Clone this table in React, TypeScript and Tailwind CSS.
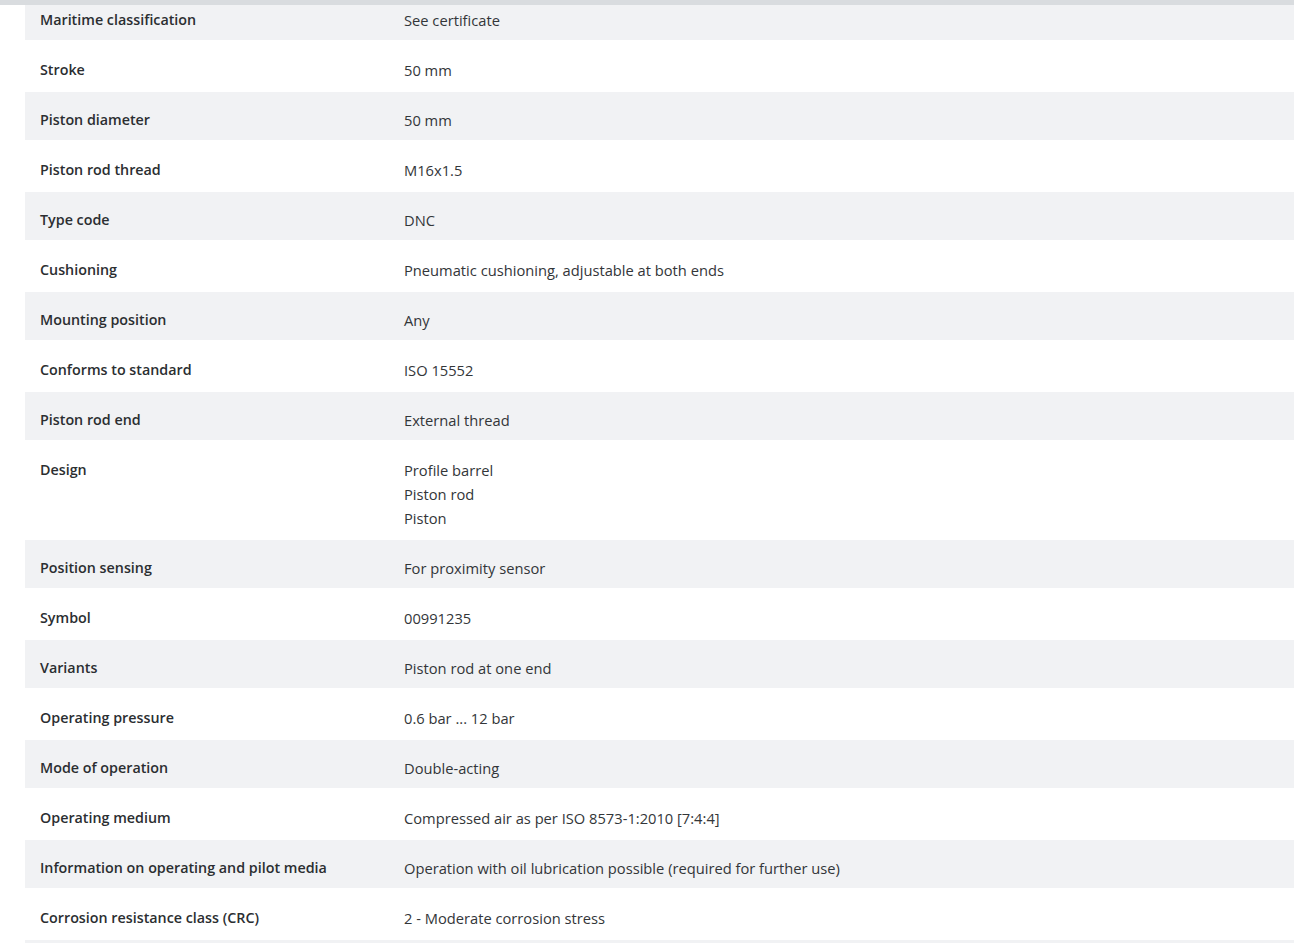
import React from "react";

interface SpecRow {
  label: string;
  value: string[];
}

const rows: SpecRow[] = [
  { label: "Maritime classification", value: ["See certificate"] },
  { label: "Stroke", value: ["50 mm"] },
  { label: "Piston diameter", value: ["50 mm"] },
  { label: "Piston rod thread", value: ["M16x1.5"] },
  { label: "Type code", value: ["DNC"] },
  { label: "Cushioning", value: ["Pneumatic cushioning, adjustable at both ends"] },
  { label: "Mounting position", value: ["Any"] },
  { label: "Conforms to standard", value: ["ISO 15552"] },
  { label: "Piston rod end", value: ["External thread"] },
  { label: "Design", value: ["Profile barrel", "Piston rod", "Piston"] },
  { label: "Position sensing", value: ["For proximity sensor"] },
  { label: "Symbol", value: ["00991235"] },
  { label: "Variants", value: ["Piston rod at one end"] },
  { label: "Operating pressure", value: ["0.6 bar ... 12 bar"] },
  { label: "Mode of operation", value: ["Double-acting"] },
  { label: "Operating medium", value: ["Compressed air as per ISO 8573-1:2010 [7:4:4]"] },
  {
    label: "Information on operating and pilot media",
    value: ["Operation with oil lubrication possible (required for further use)"],
  },
  { label: "Corrosion resistance class (CRC)", value: ["2 - Moderate corrosion stress"] },
];

const App: React.FC = () => {
  return (
    <div
      className="min-h-screen w-[1294px] overflow-hidden bg-white text-[14.7px] leading-6 text-[#333639]"
      style={{ fontFamily: "'Open Sans', 'Noto Sans', sans-serif" }}
    >
      <div className="h-[5px] w-full bg-[#d9dcdf]" />
      <div className="ml-[25px] flex flex-col">
        {rows.map((row, i) => {
          const gray = i % 2 === 0;
          const pad =
            i === 0 ? "pt-[3px] pb-2" : gray ? "pt-4 pb-2" : "pt-[18px] pb-[10px]";
          return (
            <div
              key={row.label}
              className={`flex ${pad} ${gray ? "bg-[#f1f2f4]" : "bg-white"}`}
            >
              <div className="w-[379px] shrink-0 pl-[15px] text-[14.3px] font-semibold text-[#2b2e31]">
                {row.label}
              </div>
              <div className="flex flex-col">
                {row.value.map((v) => (
                  <span key={v}>{v}</span>
                ))}
              </div>
            </div>
          );
        })}
        <div className="h-6 bg-[#f1f2f4]" />
      </div>
    </div>
  );
};

export default App;
